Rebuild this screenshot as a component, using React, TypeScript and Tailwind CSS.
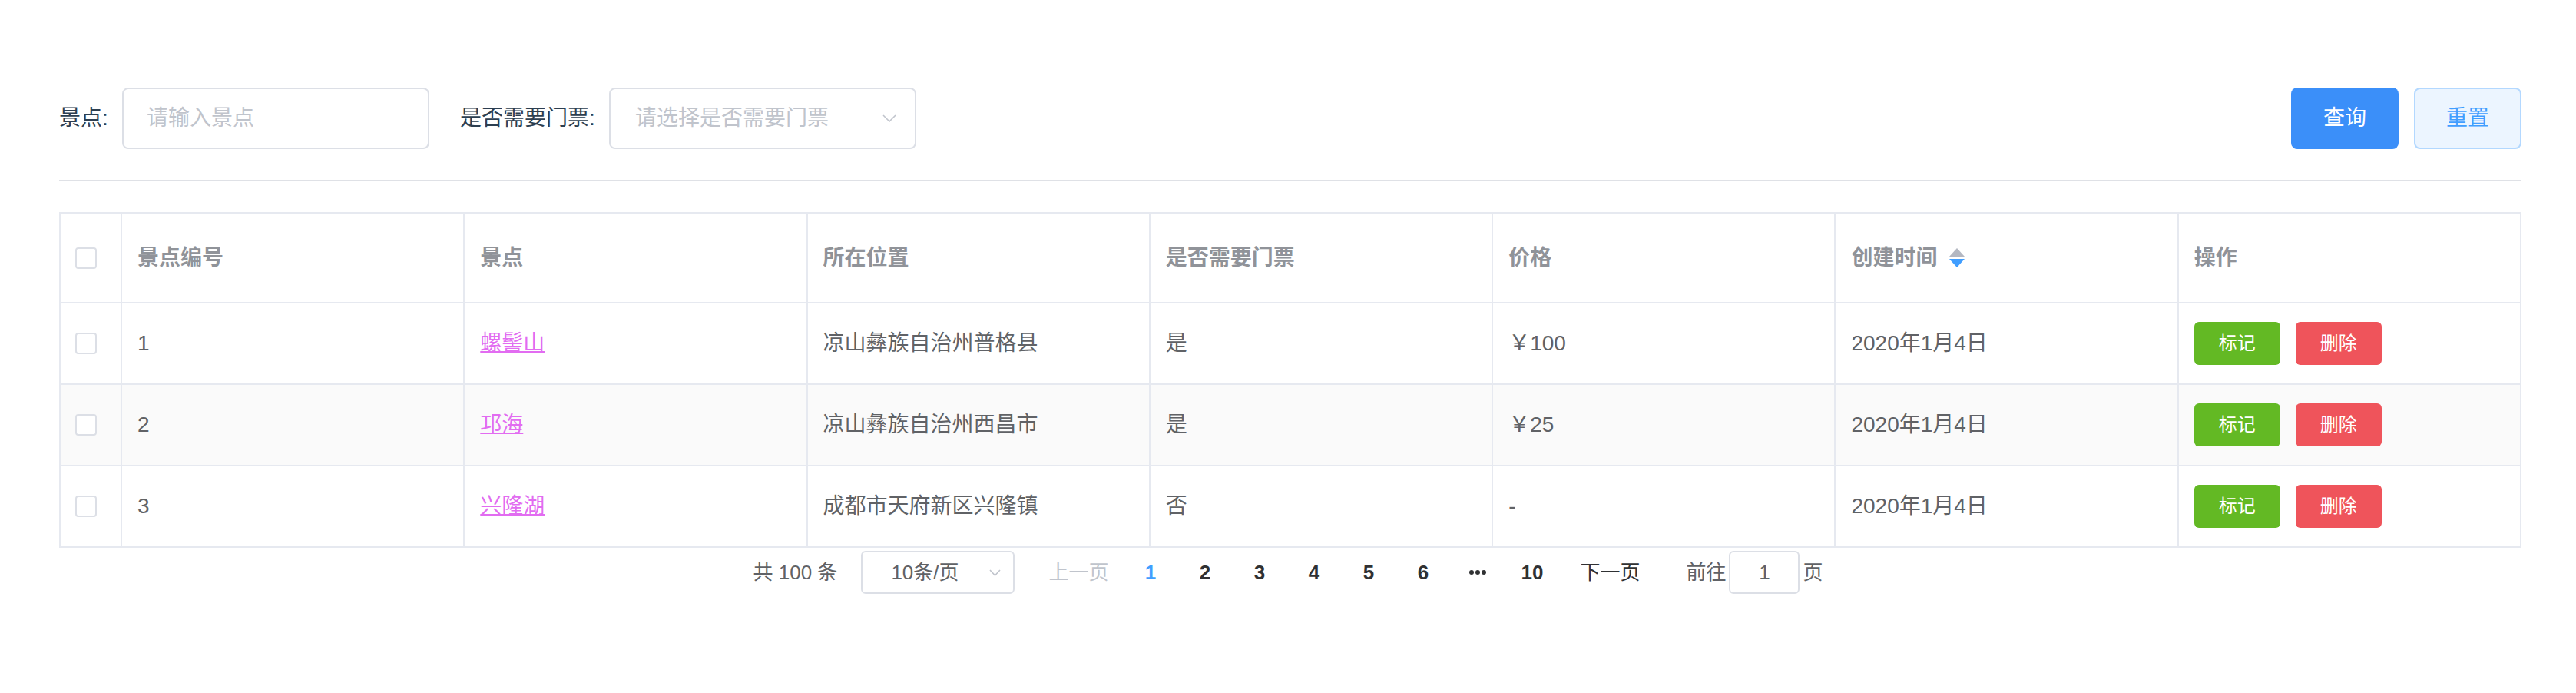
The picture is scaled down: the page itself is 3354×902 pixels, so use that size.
import React from "react";

const FONT = '"Liberation Sans", "Noto Sans CJK SC", sans-serif';

const rows = [
  { id: "1", name: "螺髻山", loc: "凉山彝族自治州普格县", ticket: "是", price: "￥100", date: "2020年1月4日" },
  { id: "2", name: "邛海", loc: "凉山彝族自治州西昌市", ticket: "是", price: "￥25", date: "2020年1月4日" },
  { id: "3", name: "兴隆湖", loc: "成都市天府新区兴隆镇", ticket: "否", price: "-", date: "2020年1月4日" },
];

function Chevron({ w, h, color }: { w: number; h: number; color: string }) {
  return (
    <svg width={w} height={h} viewBox={`0 0 ${w} ${h}`} fill="none">
      <polyline points={`1,1 ${w / 2},${h - 1} ${w - 1},1`} stroke={color} strokeWidth="1.6" />
    </svg>
  );
}

function Checkbox() {
  return <div className="h-[28px] w-[28px] rounded-[4px] border-2 border-[#dcdfe6] bg-white" />;
}

function SortIcon() {
  return (
    <svg width="20" height="25" viewBox="0 0 20 25" className="ml-[16px]">
      <polygon points="10,0 20,11 0,11" fill="#b4b8c2" />
      <polygon points="0,14 20,14 10,25" fill="#409eff" />
    </svg>
  );
}

const headers = ["景点编号", "景点", "所在位置", "是否需要门票", "价格", "创建时间", "操作"];

export default function App() {
  return (
    <div
      className="min-h-[902px] w-[3354px] bg-white pl-[77px] pr-[71px] pt-[114px]"
      style={{ fontFamily: FONT }}
    >
      {/* search bar */}
      <div className="flex h-[80px] items-center">
        <div className="w-[82px] text-[28px] text-[#2c3e50]">景点:</div>
        <div className="flex h-[80px] w-[400px] items-center rounded-[8px] border-2 border-[#dcdfe6] pl-[30px] text-[28px] text-[#c0c4cc]">
          请输入景点
        </div>
        <div className="ml-[40px] w-[194px] text-[28px] text-[#2c3e50]">是否需要门票:</div>
        <div className="flex h-[80px] w-[400px] items-center justify-between rounded-[8px] border-2 border-[#dcdfe6] pl-[32px] pr-[24px] text-[28px] text-[#c0c4cc]">
          <span>请选择是否需要门票</span>
          <Chevron w={18} h={10} color="#c0c4cc" />
        </div>
        <div className="ml-auto flex gap-[20px]">
          <button className="h-[80px] w-[140px] rounded-[8px] bg-[#3b8ff9] text-[28px] text-white">查询</button>
          <button className="h-[80px] w-[140px] rounded-[8px] border-2 border-[#b3d8ff] bg-[#ecf5ff] text-[28px] text-[#409eff]">
            重置
          </button>
        </div>
      </div>

      <div className="mt-[40px] h-[2px] bg-[#dfe1e6]" />

      {/* table */}
      <div className="mt-[40px] border-l-2 border-t-2 border-[#e6e9f0]">
        <div className="grid h-[117px] grid-cols-[80px_repeat(7,minmax(0,1fr))]">
          <div className="flex items-center border-b-2 border-r-2 border-[#e6e9f0] pl-[19px]">
            <Checkbox />
          </div>
          {headers.map((h) => (
            <div
              key={h}
              className="flex items-center border-b-2 border-r-2 border-[#e6e9f0] pl-[20px] text-[28px] font-bold text-[#909399]"
            >
              {h}
              {h === "创建时间" && <SortIcon />}
            </div>
          ))}
        </div>
        {rows.map((r, i) => (
          <div
            key={r.id}
            className={`grid h-[106px] grid-cols-[80px_repeat(7,minmax(0,1fr))] ${i === 1 ? "bg-[#fafafa]" : "bg-white"}`}
          >
            <div className="flex items-center border-b-2 border-r-2 border-[#e6e9f0] pl-[19px]">
              <Checkbox />
            </div>
            <div className="flex items-center border-b-2 border-r-2 border-[#e6e9f0] pl-[20px] text-[28px] text-[#606266]">
              {r.id}
            </div>
            <div className="flex items-center border-b-2 border-r-2 border-[#e6e9f0] pl-[20px] text-[28px]">
              <a className="text-[#e26cf1] underline decoration-2">{r.name}</a>
            </div>
            <div className="flex items-center border-b-2 border-r-2 border-[#e6e9f0] pl-[20px] text-[28px] text-[#606266]">
              {r.loc}
            </div>
            <div className="flex items-center border-b-2 border-r-2 border-[#e6e9f0] pl-[20px] text-[28px] text-[#606266]">
              {r.ticket}
            </div>
            <div className="flex items-center border-b-2 border-r-2 border-[#e6e9f0] pl-[20px] text-[28px] text-[#606266]">
              {r.price}
            </div>
            <div className="flex items-center border-b-2 border-r-2 border-[#e6e9f0] pl-[20px] text-[28px] text-[#606266]">
              {r.date}
            </div>
            <div className="flex items-center gap-[20px] border-b-2 border-r-2 border-[#e6e9f0] pl-[20px]">
              <button className="h-[56px] w-[112px] rounded-[6px] bg-[#63b924] text-[24px] text-white">标记</button>
              <button className="h-[56px] w-[112px] rounded-[6px] bg-[#ef545b] text-[24px] text-white">删除</button>
            </div>
          </div>
        ))}
      </div>

      {/* pagination */}
      <div className="mt-[4px] flex h-[56px] items-center justify-center pr-[6px] text-[26px] text-[#606266]">
        <span className="mr-[31px]">共 100 条</span>
        <div className="mr-[20px] flex h-[56px] w-[200px] items-center justify-between rounded-[6px] border-2 border-[#dcdfe6] pl-[37px] pr-[16px] text-[#606266]">
          <span>10条/页</span>
          <Chevron w={15} h={9} color="#c0c4cc" />
        </div>
        <span className="pl-[24px] pr-[19px] text-[#c0c4cc]">上一页</span>
        {["1", "2", "3", "4", "5", "6", "more", "10"].map((p) => (
          <span
            key={p}
            className={`flex w-[71px] justify-center font-bold ${p === "1" ? "text-[#409eff]" : "text-[#303133]"}`}
          >
            {p === "more" ? (
              <svg width="24" height="8" viewBox="0 0 24 8">
                <circle cx="4" cy="4" r="3" fill="#303133" />
                <circle cx="12" cy="4" r="3" fill="#303133" />
                <circle cx="20" cy="4" r="3" fill="#303133" />
              </svg>
            ) : (
              p
            )}
          </span>
        ))}
        <span className="pl-[27px] pr-[12px] text-[#303133]">下一页</span>
        <span className="ml-[48px]">前往</span>
        <div className="mx-[4px] flex h-[56px] w-[92px] items-center justify-center rounded-[6px] border-2 border-[#dcdfe6] text-[#606266]">
          1
        </div>
        <span>页</span>
      </div>
    </div>
  );
}
